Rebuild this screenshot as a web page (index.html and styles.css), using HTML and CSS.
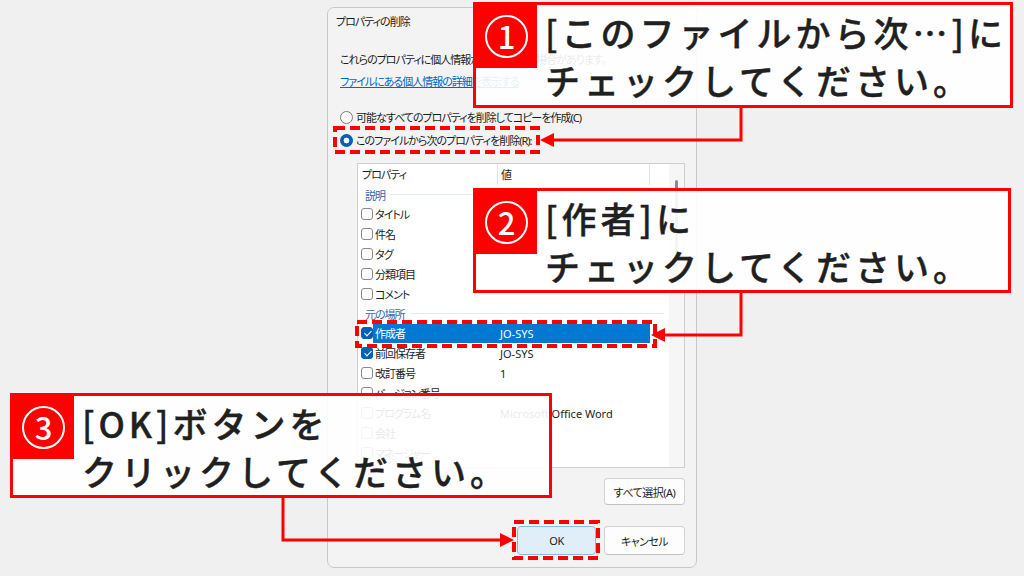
FILE: index.html
```html
<!DOCTYPE html>
<html lang="ja">
<head>
    <meta charset="UTF-8">
    <meta name="viewport" content="width=device-width, initial-scale=1.0">
    <title>プロパティの削除</title>
    <link rel="stylesheet" href="styles.css">
</head>
<body>
    <div class="stage">
        <div class="dialog">
            <div class="dialog-title">プロパティの削除</div>
            <div class="dialog-body">
                <p class="info">これらのプロパティに個人情報が含まれている場合があります。</p>
                <a class="link" href="#">ファイルにある個人情報の詳細を表示する</a>

                <div class="options">
                    <label class="radio"><span class="radio-mark"></span>可能なすべてのプロパティを削除してコピーを作成(C)</label>
                    <label class="radio"><span class="radio-mark on"></span>このファイルから次のプロパティを削除(R):</label>
                </div>

                <div class="list">
                    <div class="list-main">
                        <div class="list-head">
                            <span class="head-name">プロパティ</span>
                            <span class="head-value">値</span>
                            <span class="head-rest"></span>
                        </div>
                        <div class="group"><span>説明</span><i></i></div>
                        <div class="row"><span class="check"></span><span class="name">タイトル</span><span class="value"></span></div>
                        <div class="row"><span class="check"></span><span class="name">件名</span><span class="value"></span></div>
                        <div class="row"><span class="check"></span><span class="name">タグ</span><span class="value"></span></div>
                        <div class="row"><span class="check"></span><span class="name">分類項目</span><span class="value"></span></div>
                        <div class="row"><span class="check"></span><span class="name">コメント</span><span class="value"></span></div>
                        <div class="group"><span>元の場所</span><i></i></div>
                        <div class="row selected"><span class="check on"></span><span class="name">作成者</span><span class="value">JO-SYS</span></div>
                        <div class="row"><span class="check on"></span><span class="name">前回保存者</span><span class="value">JO-SYS</span></div>
                        <div class="row"><span class="check"></span><span class="name">改訂番号</span><span class="value">1</span></div>
                        <div class="row"><span class="check"></span><span class="name">バージョン番号</span><span class="value"></span></div>
                        <div class="row"><span class="check"></span><span class="name">プログラム名</span><span class="value">Microsoft Office Word</span></div>
                        <div class="row"><span class="check"></span><span class="name">会社</span><span class="value"></span></div>
                        <div class="row"><span class="check"></span><span class="name">マネージャー</span><span class="value"></span></div>
                    </div>
                    <div class="scrollbar"><div class="thumb"></div></div>
                </div>

                <div class="select-all">
                    <button class="btn">すべて選択(A)</button>
                </div>
                <div class="actions">
                    <button class="btn primary">OK</button>
                    <button class="btn">キャンセル</button>
                </div>
            </div>
        </div>

        <!-- red guide marks drawn over the dialog -->
        <svg class="marks" width="1024" height="576" viewBox="0 0 1024 576">
            <g fill="none" stroke="#ff0000" stroke-width="4" stroke-dasharray="10 5">
                <rect x="335" y="128" width="203" height="24"/>
                <rect x="357" y="322" width="298" height="24"/>
                <rect x="514" y="522" width="84" height="36"/>
            </g>
            <g fill="none" stroke="#ff0000" stroke-width="3">
                <polyline points="741,106 741,140 552,140"/>
                <polyline points="741,291 741,335 663,335"/>
                <polyline points="283,496 283,540 502,540"/>
            </g>
            <g fill="#ff0000">
                <polygon points="540,140 554,133 554,147"/>
                <polygon points="651,335 665,328 665,342"/>
                <polygon points="514,540 500,533 500,547"/>
            </g>
        </svg>

        <div class="callout callout-1">
            <div class="badge"><span class="num">1</span></div>
            <div class="callout-text">[このファイルから次…]に<br>チェックしてください。</div>
        </div>
        <div class="callout callout-2">
            <div class="badge"><span class="num">2</span></div>
            <div class="callout-text">[作者]に<br>チェックしてください。</div>
        </div>
        <div class="callout callout-3">
            <div class="badge"><span class="num">3</span></div>
            <div class="callout-text">[OK]ボタンを<br>クリックしてください。</div>
        </div>
    </div>
</body>
</html>
```

FILE: styles.css
```css
* {
    box-sizing: border-box;
}

body {
    margin: 0;
    background-color: #f0f0f0;
}

.stage {
    position: relative;
    width: 1024px;
    height: 576px;
    overflow: hidden;
    padding-top: 7px;
    font-family: "Noto Sans", "Noto Sans CJK JP", sans-serif;
    font-size: 11px;
    color: #1b1b1b;
}

/* dialog */

.dialog {
    width: 370px;
    margin: 0 auto;
    background-color: #f3f3f3;
    border: 1px solid #c9c9c9;
    border-radius: 7px;
    font-feature-settings: "palt";
    letter-spacing: -1px;
}

.dialog-title {
    height: 28px;
    line-height: 28px;
    padding-left: 8px;
}

.dialog-body {
    padding: 15px 11px 12px 12px;
    display: flex;
    flex-direction: column;
}

.info {
    margin: 0;
    line-height: 18px;
}

.link {
    margin-top: 4px;
    line-height: 18px;
    color: #0067c0;
    text-decoration: underline;
}

.options {
    margin-top: 17px;
    display: flex;
    flex-direction: column;
    gap: 5px;
}

.radio {
    display: flex;
    align-items: center;
    height: 18px;
    gap: 3px;
}

.radio-mark {
    width: 13px;
    height: 13px;
    border-radius: 50%;
    border: 1px solid #7a7a7a;
    background-color: #fbfbfb;
}

.radio-mark.on {
    border: none;
    background: radial-gradient(circle, #ffffff 0 2.6px, #005fb8 3.2px);
}

/* property list */

.list {
    margin: 14px 0 0 17px;
    height: 305px;
    border: 1px solid #cfcfcf;
    background-color: #ffffff;
    display: flex;
    overflow: hidden;
}

.list-main {
    flex: 1;
    display: flex;
    flex-direction: column;
}

.list-head {
    display: flex;
    height: 21px;
    line-height: 21px;
    flex-shrink: 0;
}

.head-name {
    width: 139px;
    padding-left: 4px;
}

.head-value {
    width: 153px;
    padding-left: 3px;
    border-left: 1px solid #e5e5e5;
    border-right: 1px solid #e5e5e5;
}

.group {
    display: flex;
    align-items: center;
    height: 19px;
    padding: 0 6px 0 7px;
    flex-shrink: 0;
    color: #2f63b5;
}

.group i {
    flex: 1;
    height: 1px;
    margin-left: 5px;
    background-color: #e3e9f1;
}

.row {
    display: flex;
    align-items: center;
    height: 20px;
    padding-left: 3px;
    flex-shrink: 0;
}

.check {
    position: relative;
    width: 12px;
    height: 12px;
    border: 1px solid #8a8a8a;
    border-radius: 3px;
    background-color: #ffffff;
}

.check.on {
    border-color: #005fb8;
    background-color: #005fb8;
}

.check.on::after {
    content: "";
    position: absolute;
    left: 3.5px;
    top: 1px;
    width: 3px;
    height: 6px;
    border: solid #ffffff;
    border-width: 0 1.4px 1.4px 0;
    transform: rotate(45deg);
}

.row .name {
    width: 124px;
    padding-left: 2px;
    line-height: 19px;
}

.row .value {
    width: 153px;
    padding-left: 3px;
    line-height: 19px;
    letter-spacing: 0;
}

.row.selected .name,
.row.selected .value {
    background-color: #0078d4;
    color: #ffffff;
}

.scrollbar {
    width: 15px;
    background-color: #f6f6f6;
    display: flex;
    justify-content: center;
    padding-top: 16px;
}

.thumb {
    width: 3px;
    height: 80px;
    border-radius: 2px;
    background-color: #8a8a8a;
}

/* buttons */

.select-all {
    margin-top: 10px;
    display: flex;
    justify-content: flex-end;
}

.actions {
    margin-top: 21px;
    display: flex;
    justify-content: flex-end;
    gap: 8px;
}

.btn {
    font-family: inherit;
    font-size: 11px;
    letter-spacing: -0.5px;
    color: #1b1b1b;
    width: 81px;
    height: 27px;
    padding: 0;
    background-color: #fdfdfd;
    border: 1px solid #d3d3d3;
    border-bottom-color: #c2c2c2;
    border-radius: 4px;
    font-feature-settings: "palt";
}

.actions .btn {
    height: 29px;
}

.btn.primary {
    width: 79px;
    background-color: #e0eef9;
    border-color: #86bbe8;
}

/* guide overlay */

.marks {
    position: absolute;
    left: 0;
    top: 0;
    pointer-events: none;
}

.callout {
    position: absolute;
    display: flex;
    align-items: flex-start;
    border: 3px solid #ff0000;
    background-color: rgba(255, 255, 255, 0.9);
    font-family: "Noto Sans CJK JP", sans-serif;
    font-weight: 500;
    color: #202020;
}

.callout-1 {
    left: 473px;
    top: 2px;
    width: 540px;
    height: 106px;
}

.callout-2 {
    left: 473px;
    top: 188px;
    width: 538px;
    height: 105px;
}

.callout-3 {
    left: 10px;
    top: 393px;
    width: 542px;
    height: 105px;
}

.badge {
    width: 61px;
    height: 63px;
    flex-shrink: 0;
    background-color: #ff0000;
    display: flex;
    align-items: center;
    justify-content: center;
}

.num {
    width: 43px;
    height: 43px;
    border: 2.5px solid #ffffff;
    border-radius: 50%;
    color: #ffffff;
    font-size: 31px;
    line-height: 37px;
    text-align: center;
}

.callout-text {
    padding: 3px 0 0 8px;
    font-size: 35px;
    line-height: 48px;
    letter-spacing: 4px;
    -webkit-text-stroke: 0.4px #202020;
}
```
